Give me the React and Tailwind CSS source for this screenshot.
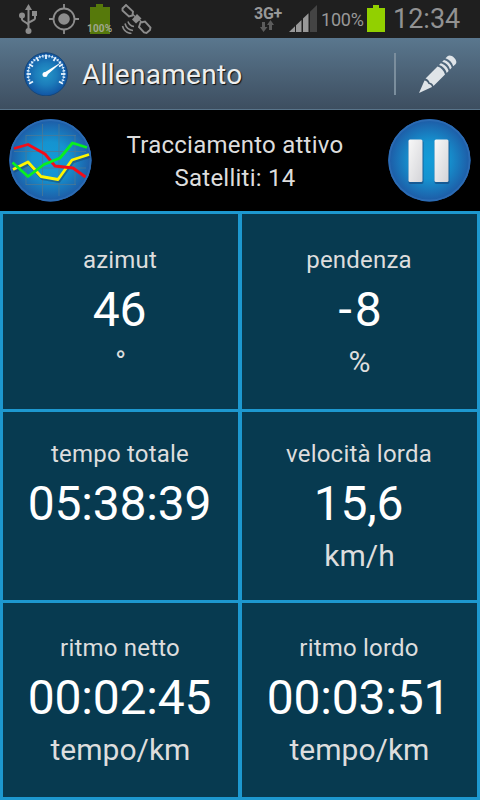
const cells = [
  { label: 'azimut', value: '46', unit: '°', pad: 'pt-[28px]' },
  { label: 'pendenza', value: '-8', unit: '%', pad: 'pt-[28px]', spacing: 'tracking-[3px] pl-[4px]' },
  { label: 'tempo totale', value: '05:38:39', unit: '', pad: 'pt-[24px]' },
  { label: 'velocità lorda', value: '15,6', unit: 'km/h', pad: 'pt-[24px]' },
  { label: 'ritmo netto', value: '00:02:45', unit: 'tempo/km', pad: 'pt-[27px]' },
  { label: 'ritmo lordo', value: '00:03:51', unit: 'tempo/km', pad: 'pt-[27px]' },
];

function UsbIcon() {
  return (
    <svg className="w-5 h-[30px]" viewBox="0 0 20 30" fill="none" stroke="#8c8c8c" strokeWidth="2">
      <path d="M10.5 26V5M4 12v3.5c0 2 6.5 3 6.5 6M17 10v4.500c0 2-6.500 3-6.500 5" />
      <path d="M10.500 0l3.500 6H7z" fill="#8c8c8c" stroke="none" />
      <circle cx="10.500" cy="27" r="3" fill="#8c8c8c" stroke="none" />
      <circle cx="4" cy="11.500" r="3" fill="#8c8c8c" stroke="none" />
      <path d="M14 7h5v5h-5z" fill="#8c8c8c" stroke="none" />
    </svg>
  );
}

function GpsIcon() {
  return (
    <svg className="w-[30px] h-[30px] ml-[11px]" viewBox="0 0 30 30" fill="none" stroke="#8c8c8c" strokeWidth="1.8">
      <circle cx="15" cy="15" r="10.500" />
      <circle cx="15" cy="15" r="5.800" fill="#8c8c8c" stroke="none" />
      <path d="M15 0v5M15 25v5M0 15h5M25 15h5" />
    </svg>
  );
}

function SatelliteIcon() {
  return (
    <svg className="w-8 h-[30px] ml-2" viewBox="0 0 32 30" fill="none" stroke="#8c8c8c" strokeWidth="1.900">
      <path d="M1.500 4.500L5 1 12 7.500 11.500 11.500 8 12.500 1.500 6.500z" />
      <path d="M19.500 18.500l4.500-1 5.500 6-.5 2.500-3.500 3-2.500-.5-5-5.500z" />
      <path d="M16 10l4.500 4.500-5.500 5-4-4z" fill="#8c8c8c" stroke="none" />
      <path d="M11 9.500l3 3M18.500 16l3 3" strokeWidth="1.200" />
      <path d="M7 17.500c1 3 3 4.500 6 5M4 19.500c1 4 4 6.500 8 7M1.500 22c1 4 4 7 9 7.500" strokeWidth="1.600" />
    </svg>
  );
}

function SignalIcon() {
  return (
    <svg className="w-[28px] h-[27px]" viewBox="0 0 28 27">
      <path d="M0 27L6 21.200V27z" fill="#989898" />
      <path d="M7 20.200L12.500 15V27H7z" fill="#989898" />
      <path d="M14 13.500L19.500 8.200V27H14z" fill="#989898" />
      <path d="M21 6.700L28 0V27H21z" fill="#444" />
    </svg>
  );
}

function StatusBar() {
  return (
    <header className="flex h-[38px] bg-[#1f1f1f] pl-[18px] text-[#989898]">
      <div className="flex pt-1">
        <UsbIcon />
        <GpsIcon />
        <div className="relative ml-[8px] w-[26px] h-[30px]">
          <svg className="ml-[3px] w-5 h-[30px]" viewBox="0 0 20 30">
            <path d="M0 3h6V0h7v3h7v27H0z" fill="#56790b" />
          </svg>
          <span className="absolute left-0 top-[20px] text-[10px] leading-[10px] font-bold tracking-[0.2px] text-[#a0a78f]">100%</span>
        </div>
        <SatelliteIcon />
      </div>
      <div className="ml-[101px] flex">
        <div className="w-[30px] pt-[7px]">
          <div className="text-[16px] leading-[14px] font-bold tracking-[-0.3px] whitespace-nowrap">3G+</div>
          <svg className="ml-[6px] -mt-px w-[14px] h-[12px]" viewBox="0 0 14 12" fill="#5c5c5c">
            <path d="M2 2h3v5h2.500L3.500 12 0 7h2zM9 10h3V5h2L10.500 0 7 5h2z" />
          </svg>
        </div>
        <div className="ml-[5px] pt-[5px]"><SignalIcon /></div>
        <span className="ml-[4px] w-[44px] pt-[9px] text-[18px] leading-[22px] tracking-[-0.2px] whitespace-nowrap">100%</span>
        <svg className="mt-[5px] ml-[2px] w-[18px] h-[27px]" viewBox="0 0 18 27">
          <path d="M0 3h6V0h6v3h6v24H0z" fill="#92d000" />
        </svg>
        <span className="ml-[8px] pt-[4px] text-[27px] leading-[30px] whitespace-nowrap text-[#929292]">12:34</span>
      </div>
    </header>
  );
}

// Tick marks run clockwise around the dial from lower left to lower right
function GaugeIcon() {
  const ticks = Array.from({ length: 25 }, (_, i) => -120 + i * 10);
  return (
    <svg className="w-11 h-11" viewBox="0 0 44 44">
      <defs>
        <radialGradient id="gauge">
          <stop offset="0" stopColor="#2596c8" />
          <stop offset="0.500" stopColor="#1c7dbb" />
          <stop offset="1" stopColor="#1155a3" />
        </radialGradient>
      </defs>
      <circle cx="22" cy="22.300" r="21.500" fill="url(#gauge)" stroke="#174779" strokeWidth="1" />
      <path d="M6.400 31A18 18 0 1 1 37.600 31" transform="translate(0 -.3)" fill="none" stroke="#d9edf8" strokeWidth="0.700" />
      {ticks.map((a, i) => (
        <path key={a} d={i % 3 === 0 ? 'M22 2.500v4.500' : 'M22 2.500v2.800'} transform={`rotate(${a} 22 22)`} stroke="#e8f5ff" strokeWidth={i % 3 === 0 ? 1.8 : 1.1} />
      ))}
      <path d="M22 24L38 9.800 20.500 20.500z" fill="#fff" />
      <circle cx="21" cy="22.500" r="2.500" fill="#fff" />
    </svg>
  );
}

function PencilIcon() {
  return (
    <svg className="w-[38px] h-[38px]" viewBox="0 0 38 38" fill="#dfe4e8">
      <path d="M0 38L5.500 25.500C8 26 9 27.500 9.500 29c2 .3 3 1.200 3.500 3z" />
      <path d="M6.500 23.500L18.500 11.500C22 12.500 25 15.500 26 19.500L14.500 31C14 29 12.500 28 10.700 27.700 10 25.500 8.500 24 6.500 23.500z" />
      <path d="M20 10l1.800-1.800c3.800 1 7 4.200 7.800 7.800L27.700 18c-1-4-4-7-7.700-8z" />
      <path d="M23.200 6.800L25 5c3.800 1 6.800 4 7.700 7.700L31 14.500c-1-3.700-4-6.700-7.800-7.700z" />
      <path d="M26.500 3.300L28.500 1.300C32-2 40 5.500 36.500 9.200L34.200 11.300C33.200 7.500 30.300 4.500 26.500 3.300z" />
    </svg>
  );
}

function ActionBar() {
  return (
    <div className="flex h-[72px] items-center border-b border-[#59748a] bg-linear-to-b from-[#5a778e] to-[#3d4e60] pl-6">
      <GaugeIcon />
      <h1 className="ml-[14px] w-[312px] pt-[2px] text-[28px] leading-[36px] tracking-[0.3px] text-[#eee] [text-shadow:1px_1px_1px_#111]">Allenamento</h1>
      <div className="h-[42px] w-[2px] bg-[#7b8e9d]" />
      <div className="ml-[23px]"><PencilIcon /></div>
    </div>
  );
}

function RoundButton({ id, children }) {
  return (
    <button className="block w-[84px] h-[84px]">
      <svg className="w-[84px] h-[84px]" viewBox="0 0 84 84">
        <defs>
          <radialGradient id={id}>
            <stop offset="0" stopColor="#139bd7" />
            <stop offset="0.450" stopColor="#1593d0" />
            <stop offset="1" stopColor="#1e5aa5" />
          </radialGradient>
          <linearGradient id={`${id}-bar`} x1="0" y1="0" x2="1" y2="1">
            <stop offset="0" stopColor="#f8f8f8" />
            <stop offset="1" stopColor="#d4d4d8" />
          </linearGradient>
        </defs>
        <circle cx="42.400" cy="42.300" r="41.200" fill={`url(#${id})`} />
        <circle cx="42.400" cy="42.300" r="40.200" fill="none" stroke="#2b6bb3" strokeWidth="1.800" />
        {children}
      </svg>
    </button>
  );
}

function TrackingPanel() {
  return (
    <div className="flex h-[101px] items-start bg-black pt-[8px] pl-[8px]">
      <RoundButton id="chart">
        <path d="M34.500 6v72M51 6v72M18 17v50M67 17v50M18 17.500h50M6 33.500h72M6 50h72M18 66.500h50" stroke="#4d7893" strokeOpacity="0.750" fill="none" />
        <g fill="none" strokeWidth="2.800" strokeLinejoin="round">
          <path d="M5 51.500L20 44 33 58.500 50 61.500 64 42 81 36.500" stroke="#1a4365" strokeOpacity="0.500" transform="translate(1 2)" />
          <path d="M5 51.500L20 44 33 58.500 50 61.500 64 42 81 36.500" stroke="#fff500" />
          <path d="M6 30.500L20 26.500 37 36 47 48 65 50 77.500 59" stroke="#f20d19" />
          <path d="M4.500 44.500L20 58.500 36 46.500 52 40 64.500 25 79 29.500" stroke="#08ef20" />
        </g>
      </RoundButton>
      <div className="mt-[11px] ml-[28px] w-[230px] text-center text-[24px] leading-[33px] tracking-[0.240px] text-[#ddd]">
        <p>Tracciamento attivo</p>
        <p>Satelliti: 14</p>
      </div>
      <div className="ml-[37px]">
        <RoundButton id="pause">
          <g fill="#154c83" opacity="0.700">
            <rect x="21.500" y="22.500" width="15" height="43.500" rx="2" />
            <rect x="47.500" y="22.500" width="15" height="43.500" rx="2" />
          </g>
          <g fill="url(#pause-bar)">
            <rect x="21.500" y="21.500" width="14" height="42.500" rx="1.500" />
            <rect x="47.500" y="21.500" width="14" height="42.500" rx="1.500" />
          </g>
        </RoundButton>
      </div>
    </div>
  );
}

function Cell({ label, value, unit, pad, spacing = 'tracking-[-0.2px] pr-[2px]' }) {
  return (
    <div className={`bg-[#073a50] text-center whitespace-nowrap text-[#ddd] ${pad}`}>
      <div className="pr-px text-[24px] leading-[36px] tracking-[0.2px]">{label}</div>
      <div className={`text-[48px] leading-[64px] text-white ${spacing}`}>{value}</div>
      <div className="text-[30px] leading-[40px]">{unit}</div>
    </div>
  );
}

export default function App() {
  return (
    <div className="w-[480px] h-[800px] overflow-hidden bg-black font-['Roboto',sans-serif] antialiased">
      <StatusBar />
      <ActionBar />
      <TrackingPanel />
      <main className="grid h-[589px] grid-cols-2 grid-rows-[195px_188px_194px] gap-x-[4px] gap-y-[3px] bg-[#1d98cf] p-[3px]">
        {cells.map((cell) => (
          <Cell key={cell.label} {...cell} />
        ))}
      </main>
    </div>
  );
}
